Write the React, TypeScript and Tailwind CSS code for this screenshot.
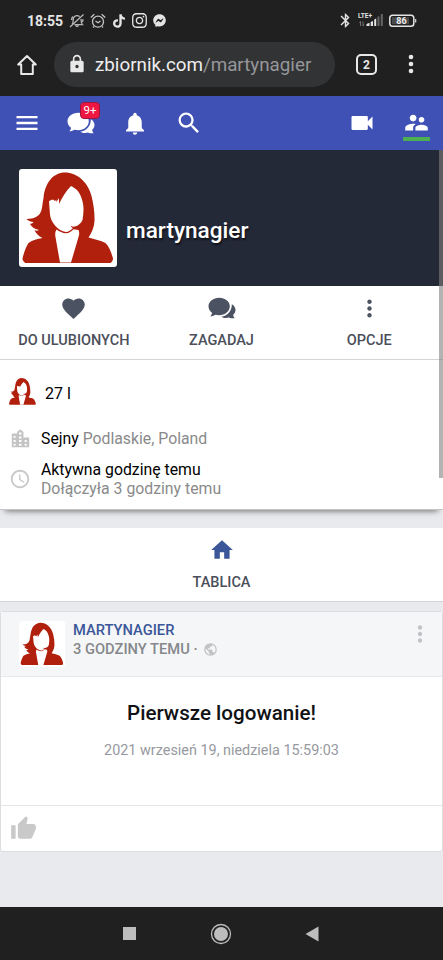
import type { ReactNode } from 'react';
import { FaInstagram, FaTiktok, FaFacebookMessenger } from 'react-icons/fa';
import {
  MdBluetooth,
  MdFavorite,
  MdHome,
  MdLock,
  MdMenu,
  MdMoreVert,
  MdNotifications,
  MdPublic,
  MdSchedule,
  MdSearch,
  MdSupervisorAccount,
  MdThumbUp,
  MdVideocam,
} from 'react-icons/md';

function Avatar({ className }: { className?: string }) {
  return (
    <svg viewBox="0 0 98 98" className={className}>
      <path
        fill="#b0200c"
        d="M46 3.500C58 3.500 69 13 72.500 27c2 8 3.300 17 3 25-.5 7-3 12-6 16.500 6 2 12 2.500 17 5.500 4 4 6 10 7.500 15.500 0 2-1.500 4.500-3 4.500H7c-1.500 0-3.500-2.500-3.500-4.500C5 83 7 78 9.500 74c4-3 9-4 14-5-4-2-6.500-4.500-8-8 1.500.7 3 1 4.500 0-4-1-8-3-9-6.500 1.500.5 2.500.2 3.500-1.500-3-.3-5.500-1.300-7-3 8 0 13.500-3 15-9 1-4 1.200-8 2-12C26 14 34 3.500 46 3.500Z"
      />
      <path
        fill="#fff"
        d="M30 32.500c1-1.200 2-1.700 4-1.700 1 0 1.500.7 2 1.500l1.200-1.800.3 2.500L40 29v6c3-6.500 7-13 12-18 4 2 8 5 9.500 9.500 1.700 4 3 8.500 3 13 0 5-.5 8-1 11.500-1.500 3.500-5 6.500-9 6.700l-2.700-.7c.4 1.200 1.200 1.700 2.200 2-2 2.200-4.500 4-7 4-4-.3-8-3-11-6.500-3-3.500-4.500-7-5-11Z"
      />
      <path fill="#fff" d="M37.500 60.500c3 2 6 3.700 9.500 3.700 3 0 5.500-1.700 7.500-4l5 .8c1 2.500.8 4 .3 6L52 93.600H41L36.300 67c-.2-3 0-4.500 1.200-6.500Z" />
    </svg>
  );
}

function Chat({ className }: { className?: string }) {
  return (
    <svg viewBox="0 0 28 22" className={className} fill="currentColor">
      <path d="M11.200.8C5.300.8.500 4.500.500 9.300c0 2.700 1.400 5 3.500 6.500-.1 1.500-.7 2.600-1.700 3.500 2.200 0 4-.6 5.200-1.500 1.200.3 2.400.4 3.700.4 5.900 0 10.600-4 10.600-8.900S17.100.8 11.200.8Z" />
      <path d="M23.800 7.200c.2 7.200-4.500 11.500-10.500 12.500 2 1.200 5 1.600 7.700.8 1.500.8 3.200 1 5.700.8-.9-.9-1.400-2-1.500-3.500 1.500-1.300 2.300-2.900 2.300-4.800 0-2.500-1.400-4.500-3.700-5.800Z" />
    </svg>
  );
}

function StatusBar() {
  return (
    <div className="flex h-[41px] items-center pl-[27px] pr-[27px] text-[#e4e4e4]">
      <span className="w-[43px] whitespace-nowrap text-[14px] font-bold leading-none">18:55</span>
      <svg viewBox="0 0 16 16" className="-ml-px h-4 w-4 text-[#b5b5b5]" fill="none" stroke="currentColor" strokeWidth="1.300">
        <path d="M14.500 1.500 1 14M3 11.500c1.500-1.500 1-4 1.300-5.500C4.700 4 6 2.700 8 2.700c1 0 2 .4 2.600 1M12 6c.2 2 0 4 1.500 5.700H5.500M6.700 12c.2 2 2.500 2 2.700 0M2.500 7c0-1.500.5-2.500 1.300-3.500M13.500 9c.5-1 .5-2 .2-3" />
      </svg>
      <svg viewBox="0 0 16 16" className="ml-[5px] h-4 w-4 text-[#c4c4c4]" fill="none" stroke="currentColor" strokeWidth="1.300">
        <circle cx="8" cy="8.700" r="5.500" />
        <path d="M.8 4.500 4.300 1.200M15.200 4.500l-3.500-3.300M5.500 8 8 9.800 10.500 8M4 13.500l-1 1M12 13.500l1 1" />
      </svg>
      <FaTiktok className="ml-[7px] h-[14px] w-[12px]" />
      <FaInstagram className="ml-[6px] h-[17px] w-[17px]" />
      <FaFacebookMessenger className="ml-[5px] h-[13px] w-[13px]" />
      <MdBluetooth className="ml-auto h-[17px] w-[17px]" />
      <svg viewBox="0 0 25 15" className="ml-[4px] h-[15px] w-[25px]" fill="#e4e4e4">
        <text x="0" y="5.300" fontFamily="Roboto, sans-serif" fontSize="6.500" fontWeight="700">LTE+</text>
        <path d="M8.500 13v-2l3-1.200V13zM12.700 13V9l2.300-1v5zM16.200 13V6.500l2-1V13z" />
        <path fill="#666" d="M19.500 13V3.500h2V13zM22.800 13V1h2v12z" />
        <path fill="none" stroke="#888" strokeWidth=".8" d="M2.500 13V8.500L1.500 10M5 8.500V13l1-1.500" />
      </svg>
      <svg viewBox="0 0 28 14" className="-mr-px ml-[6px] h-[14px] w-[28px]">
        <rect x=".8" y="1.200" width="24" height="11" rx="2.800" fill="none" stroke="#e4e4e4" strokeWidth="1.500" />
        <rect x="3" y="3.200" width="17" height="7" fill="#4b4b4b" />
        <path fill="#ccc" d="M26 5h1.300v3.500H26z" />
        <text x="12.500" y="10" textAnchor="middle" fontFamily="Roboto, sans-serif" fontSize="9" fontWeight="700" fill="#eee">86</text>
      </svg>
    </div>
  );
}

function BrowserBar() {
  return (
    <div className="flex h-[55px] pl-[16px] text-[#e8e8e8]">
      <svg viewBox="0 0 22 22" className="mt-[13px] h-[22px] w-[22px]" fill="none" stroke="currentColor" strokeWidth="2">
        <path d="M11 2 2.200 10.500h3v9.500h11.600v-9.500h3z" strokeLinejoin="round" />
      </svg>
      <div className="ml-[16px] mt-[1px] flex h-[45px] w-[281px] items-center rounded-full bg-[#323335] pl-[13px]">
        <MdLock className="-mt-[2px] h-[20px] w-[20px]" />
        <span className="ml-[8px] mt-px whitespace-nowrap text-[18.8px] leading-6 text-[#ededed]">
          zbiornik.com<span className="text-[#96979a]">/martynagier</span>
        </span>
      </div>
      <div className="ml-[21px] mt-[13px] flex h-[21px] w-[21px] items-center justify-center rounded-[5px] border-2 border-[#e8e8e8] text-[12px] font-bold">
        2
      </div>
      <svg viewBox="0 0 6 20" className="ml-[31px] mt-[13px] h-[20px] w-[6px]" fill="currentColor">
        <circle cx="3" cy="3" r="2.300" />
        <circle cx="3" cy="10" r="2.300" />
        <circle cx="3" cy="17" r="2.300" />
      </svg>
    </div>
  );
}

function NavBar() {
  return (
    <nav className="flex h-[54px] items-center bg-[#3f51b5] pl-[13px] pr-[13px] text-white">
      <MdMenu className="h-7 w-7" />
      <div className="relative ml-[26px]">
        <Chat className="h-[22px] w-[28px]" />
        <span className="absolute left-[13px] top-[-10px] flex h-[17px] w-[20px] items-center justify-center rounded-[4px] border border-[#a01540] bg-[#ee1742] text-[11.500px] leading-none">
          9+
        </span>
      </div>
      <MdNotifications className="ml-[26px] h-[27px] w-[28px]" />
      <MdSearch className="ml-[26px] h-[28px] w-[28px]" />
      <MdVideocam className="ml-auto h-[28px] w-[28px]" />
      <div className="ml-[27px] flex h-[35px] w-[27px] flex-col justify-between">
        <MdSupervisorAccount className="mt-[3px] h-[27px] w-[27px]" />
        <div className="h-[4px] w-[27px] shrink-0 bg-[#4caf50]" />
      </div>
    </nav>
  );
}

function Action({ icon, label }: { icon: ReactNode; label: string }) {
  return (
    <div className="flex flex-1 flex-col items-center text-[#4b5262]">
      <div className="flex h-[47px] items-center justify-center pb-[3px]">{icon}</div>
      <span className="text-[14.500px] font-medium leading-4 text-[#4b4f5a]">{label}</span>
    </div>
  );
}

export default function App() {
  return (
    <div className="relative flex h-[960px] w-[443px] flex-col overflow-hidden bg-[#e9eaed] font-[Roboto,sans-serif]">
      <header className="bg-[#202020]">
        <StatusBar />
        <BrowserBar />
      </header>
      <NavBar />

      <section className="flex h-[136px] shrink-0 bg-[#242938] pl-[19px] pt-[19px]">
        <div className="h-[98px] w-[98px] rounded-[3px] bg-white">
          <Avatar className="h-[98px] w-[98px]" />
        </div>
        <h1 className="ml-[9px] mt-[48px] text-[22.600px] font-medium leading-7 text-white [text-shadow:1px_2px_2px_#0009]">
          martynagier
        </h1>
      </section>

      <section className="flex h-[74px] shrink-0 border-b border-[#d4d4d6] bg-white">
        <Action icon={<MdFavorite className="h-[27px] w-[27px]" />} label="DO ULUBIONYCH" />
        <Action icon={<Chat className="h-[22px] w-[28px]" />} label="ZAGADAJ" />
        <Action icon={<MdMoreVert className="h-[27px] w-[27px]" />} label="OPCJE" />
      </section>

      <section className="h-[150px] shrink-0 border-b border-[#c6c6c8] bg-white text-[15.800px] leading-[19px] text-black shadow-[0_6px_6px_-5px_#0008]">
        <div className="flex h-[66px] items-center pl-[8px]">
          <Avatar className="-mt-[3px] h-[29px] w-[29px]" />
          <span className="ml-[8px] text-[16px]">27 l</span>
        </div>
        <div className="flex h-[24px] items-center pl-[11px]">
          <svg viewBox="0 0 19 19" className="h-[19px] w-[19px]" fill="#c4c4c4">
            <path fillRule="evenodd" d="M.8 4.500H6V3l3.200-2.800L12.500 3v5.500h5.700v9.700H.8zM8 3.600v2h2.500v-2zM2.600 7v1.800h2V7zm5.400.5v2h2.500v-2zM2.600 11v2h2v-2zm5.400 0v2h2.500v-2zm5.700 0v2h2v-2zM2.600 14.700v2h2v-2zm5.400 0v2h2.500v-2zm5.700 0v2h2v-2z" />
          </svg>
          <span className="ml-[11px] text-[#8a8a8a]">
            <span className="text-black">Sejny</span> Podlaskie, Poland
          </span>
        </div>
        <div className="mt-[10px] flex items-center pl-[9px]">
          <MdSchedule className="h-[22px] w-[22px] text-[#c9c9c9]" />
          <div className="ml-[10px]">
            <p>Aktywna godzinę temu</p>
            <p className="text-[#8a8a8a]">Dołączyła 3 godziny temu</p>
          </div>
        </div>
      </section>

      <section className="mt-[18px] flex h-[74px] shrink-0 border-b border-[#d4d5d8] bg-white">
        <Action icon={<MdHome className="h-[26px] w-[26px] text-[#3b5699]" />} label="TABLICA" />
      </section>

      <article className="mt-[9px] flex h-[241px] shrink-0 flex-col rounded-[3px] border border-[#dcdde0] bg-white">
        <div className="flex h-[65px] border-b border-[#e8e9eb] bg-[#f5f6f8] pl-[18px] pt-[9px]">
          <div className="h-[46px] w-[46px] rounded-[3px] bg-white">
            <Avatar className="h-[46px] w-[46px]" />
          </div>
          <div className="ml-[8px] text-[14.700px] leading-[19px]">
            <p className="font-medium text-[#3b5699]">MARTYNAGIER</p>
            <p className="flex items-center font-medium text-[#85878b]">
              3 GODZINY TEMU ·
              <MdPublic className="ml-[5px] h-[15px] w-[15px] text-[#c2c3c5]" />
            </p>
          </div>
          <MdMoreVert className="ml-auto mr-[9px] h-[26px] w-[26px] text-[#c0c2c5]" />
        </div>
        <div className="flex flex-1 flex-col items-center pt-[24px]">
          <h2 className="text-[20.600px] font-medium leading-6 text-[#111216]">Pierwsze logowanie!</h2>
          <p className="mt-[15px] text-[14.400px] leading-[22px] text-[#9799a0]">2021 wrzesień 19, niedziela 15:59:03</p>
        </div>
        <div className="flex h-[46px] items-center border-t border-[#e3e4e6] pl-[9px]">
          <MdThumbUp className="h-[27px] w-[27px] text-[#c9c9c9]" />
        </div>
      </article>

      <footer className="mt-auto flex h-[53px] shrink-0 items-center bg-[#202020] pl-[123px]">
        <div className="h-[13px] w-[13px] bg-[#bdbdbd]" />
        <svg viewBox="0 0 22 22" className="ml-[74px] h-[22px] w-[22px]">
          <circle cx="11" cy="11" r="9.500" fill="none" stroke="#bdbdbd" strokeWidth="1.300" />
          <circle cx="11" cy="11" r="7" fill="#bdbdbd" />
        </svg>
        <svg viewBox="0 0 14 16" className="ml-[73px] h-4 w-[14px]" fill="#bdbdbd">
          <path d="M13.500.5v15L.5 8z" />
        </svg>
      </footer>

      {/* page scrollbar */}
      <div className="absolute right-0 top-[150px] h-[328px] w-[4px] bg-[#808080]/60" />
    </div>
  );
}
